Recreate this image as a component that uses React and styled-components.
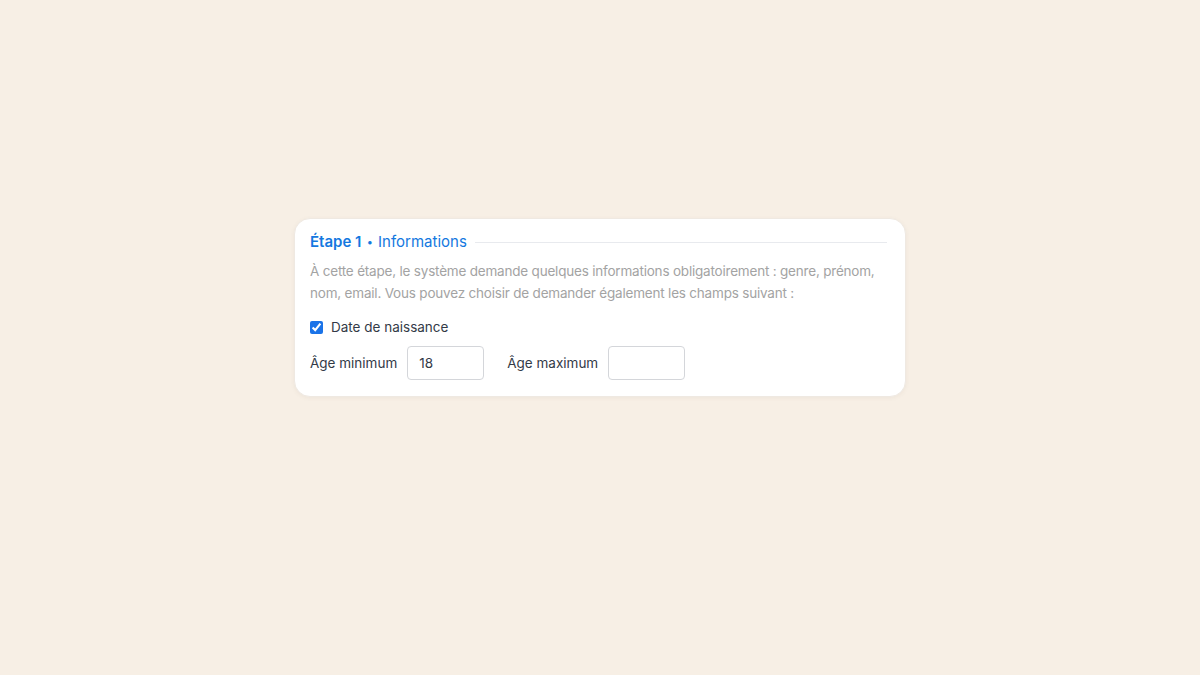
import React from "react";
import styled, { createGlobalStyle } from "styled-components";

const Global = createGlobalStyle`
  html, body {
    margin: 0;
    padding: 0;
    background: #f7efe5;
    font-family: Inter, "Noto Sans", sans-serif;
  }
  * { box-sizing: border-box; }
`;

const Page = styled.div`
  width: 1200px;
  height: 675px;
  display: flex;
  justify-content: center;
  align-items: flex-start;
  padding-top: 218px;
`;

const Card = styled.div`
  width: 612px;
  background: #ffffff;
  border-radius: 16px;
  border: 1px solid #efe9e2;
  box-shadow: 0 1px 4px rgba(120, 100, 80, 0.07);
  padding: 13px 18px 16px 15px;
`;

const Title = styled.div`
  display: flex;
  align-items: center;
  gap: 8px;
  font-size: 15px;
  color: #1478e0;
  line-height: 20px;
  &::after {
    content: "";
    flex: 1;
    height: 1px;
    background: #e8eaee;
  }
  b {
    font-weight: 600;
  }
`;

const Dot = styled.span`
  font-size: 11px;
  vertical-align: 1px;
  margin: 0 1px;
`;

const Desc = styled.p`
  margin: 8px 0 0;
  font-size: 13.5px;
  letter-spacing: -0.2px;
  line-height: 22px;
  color: #a3a3a3;
`;

const CheckRow = styled.label`
  display: flex;
  align-items: center;
  gap: 8px;
  margin-top: 15px;
  font-size: 13.5px;
  color: #333a47;
  input {
    margin: 0;
    width: 13px;
    height: 13px;
    accent-color: #1a73e8;
  }
`;

const Fields = styled.div`
  display: flex;
  align-items: center;
  margin-top: 11px;
`;

const Field = styled.label`
  display: flex;
  align-items: center;
  gap: 10px;
  margin-right: 23px;
  font-size: 13.5px;
  color: #333a47;
`;

const Input = styled.input`
  width: 77px;
  height: 34px;
  border: 1px solid #d4d6da;
  border-radius: 4px;
  padding: 0 11px;
  font-family: Inter, sans-serif;
  font-size: 13.5px;
  color: #333a47;
  outline: none;
`;

export default function App() {
  return (
    <>
      <Global />
      <Page>
        <Card>
          <Title>
            <span>
              <b>Étape 1</b> <Dot>•</Dot> Informations
            </span>
          </Title>
          <Desc>
            À cette étape, le système demande quelques informations obligatoirement : genre, prénom,
            nom, email. Vous pouvez choisir de demander également les champs suivant :
          </Desc>
          <CheckRow>
            <input type="checkbox" defaultChecked />
            Date de naissance
          </CheckRow>
          <Fields>
            <Field>
              Âge minimum
              <Input defaultValue="18" />
            </Field>
            <Field>
              Âge maximum
              <Input defaultValue="" />
            </Field>
          </Fields>
        </Card>
      </Page>
    </>
  );
}
